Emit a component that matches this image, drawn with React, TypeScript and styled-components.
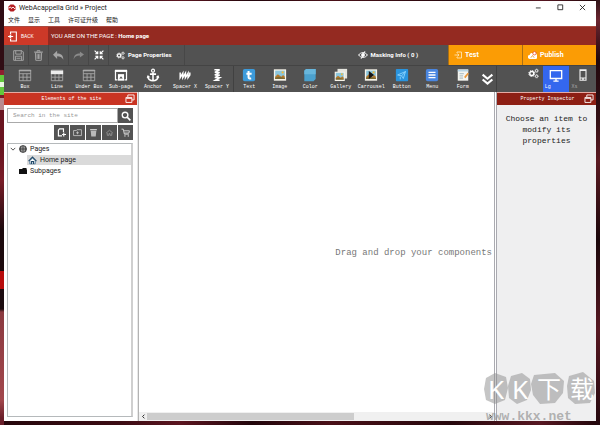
import React from "react";
import styled, { createGlobalStyle } from "styled-components";

const sans = `Roboto, "Noto Sans", "Noto Sans CJK SC", sans-serif`;
const mono = `"Liberation Mono", "Noto Sans CJK SC", monospace`;

const GlobalStyle = createGlobalStyle`
  * { box-sizing: border-box; }
  body { margin: 0; font-family: ${sans}; font-size: 7px; color: #222; overflow: hidden; }
  button, input { font: inherit; color: inherit; border: 0; padding: 0; margin: 0; background: none; }
  svg { display: block; flex: none; }
`;

const Desktop = styled.div`
  position: relative;
  height: 100vh;
  padding: 1px 4px 4px;
  background:
    linear-gradient(#300d14 0 70px, #8f1f30 70px 75px, #62c83c 75px 82px, #e8f6e0 82px 87px, #62c83c 87px 95px, #7a1c28 95px 98px, #b98b90 98px 110px, #6a1420 110px 150px, #7a1d28 180px, #1c0a0e 230px 271px, #b80c0c 271px 289px, #1c0c10 289px 309px, #8b3a40 312px, #a2474c 400px, #6a1f2a 418px) left / 4px 100% no-repeat,
    linear-gradient(#32161a, #6b2530 20px, #22080d 60px, #331015 120px, #5c1a22 160px, #1b070b 240px, #571822 330px, #24080e) right / 4px 100% no-repeat,
    linear-gradient(90deg, #25070c, #3c0c14 20%, #5c1520 30%, #22050b 42%, #4a1018 55%, #26070c 75%, #571722 90%, #20060a);
`;

const Window = styled.div`
  display: flex;
  flex-direction: column;
  height: 100%;
  background: #fff;
`;

const TitleBar = styled.header`
  display: flex;
  align-items: center;
  height: 13px;
  padding: 0 4px;
  gap: 3px;
  font-size: 7px;
  line-height: 10px;
`;
const Title = styled.h1`
  flex: 1;
  margin: 0;
  font-size: 7px;
  font-weight: 400;
`;
const WindowButton = styled.button`
  display: grid;
  place-items: center;
  width: 19px;
  height: 13px;
`;

const MenuBar = styled.nav`
  display: flex;
  align-items: center;
  height: 12px;
  padding: 0 4px;
  gap: 8px;
  font: 6px/10px "Noto Sans CJK SC", sans-serif;
`;

const LocationBar = styled.div`
  display: flex;
  height: 19px;
  background: #942a21;
  border-top: 1px solid #ab4a40;
  color: #fff;
  font-size: 6px;
  line-height: 10px;
  align-items: stretch;
`;
const BackButton = styled.button`
  display: flex;
  align-items: center;
  width: 44px;
  padding-left: 4px;
  gap: 4px;
  background: #cd3928;
  font-size: 5px;
`;
const Location = styled.p`
  margin: 0;
  padding-left: 3px;
  align-self: center;
`;

const ActionBar = styled.div`
  display: flex;
  height: 20px;
  background: #525252;
  color: #fff;
`;
const ToolButton = styled.button<{ $first?: boolean }>`
  display: grid;
  place-items: center;
  width: ${(p) => (p.$first ? 25 : 20)}px;
  padding-left: ${(p) => (p.$first ? 4 : 0)}px;
  border-right: 1px solid #474747;
`;
const TextButton = styled.button`
  display: flex;
  align-items: center;
  gap: 3px;
  padding: 0 13px 0 7px;
  border-right: 1px solid #474747;
  font-size: 6px;
  font-weight: 700;
  line-height: 10px;
  white-space: nowrap;
`;
const MaskingButton = styled(TextButton)`
  margin-left: auto;
  padding: 0 30px 0 0;
  border: 0;
`;
const AccentButton = styled(TextButton)`
  width: 74px;
  padding: 0 0 0 5px;
  border: 0;
  border-left: 1px solid #a86f16;
  background: #fb9c05;
  font-size: 7px;
`;

const ComponentBar = styled.div`
  display: flex;
  height: 27px;
  background: #525252;
  border-top: 1px solid #444;
  color: #fff;
`;
const LayoutGroup = styled.div`
  display: flex;
  width: 230px;
  padding-left: 5px;
  border-right: 1px solid #414141;
`;
const ContentGroup = styled.div`
  display: flex;
  flex: 1;
  min-width: 0;
`;
const ComponentButton = styled.button`
  display: flex;
  flex: 1 1 0;
  min-width: 0;
  flex-direction: column;
  align-items: center;
  padding-top: 2px;
  gap: 1px;
  font: 5px/8px ${mono};
  white-space: nowrap;
`;
const MoreButton = styled.button`
  display: grid;
  place-items: center;
  width: 18px;
`;
const DeviceGroup = styled.div`
  display: flex;
  width: 100px;
  padding-left: 30px;
  border-left: 1px solid #414141;
`;
const DeviceButton = styled.button<{ $active?: boolean }>`
  display: grid;
  grid-template-rows: 17px 8px;
  width: 27px;
  place-items: center;
  background: ${(p) => (p.$active ? "#3467ee" : "transparent")};
  color: ${(p) => (p.$active ? "#fff" : "#aaa")};
  font: 5px/8px ${mono};
  span { justify-self: start; padding-left: 2px; }
`;
const SettingsButton = styled.button`
  width: 16px;
  align-self: start;
  padding: 2px 0 0 1px;
`;

const Workspace = styled.main`
  display: flex;
  flex: 1;
  min-height: 0;
`;
const LeftPanel = styled.aside`
  display: flex;
  flex-direction: column;
  width: 134px;
  border-right: 1px solid #e8e8e8;
`;
const PanelHeader = styled.h2<{ $dark?: boolean }>`
  display: flex;
  align-items: center;
  margin: 0;
  height: 13px;
  padding: 0 2px 0 14px;
  border-top: 1px solid #e6aaa3;
  background: ${(p) => (p.$dark ? "#8d1f14" : "#c93423")};
  color: #fff;
  font: 5px/8px ${mono};
  span { flex: 1; text-align: center; white-space: nowrap; }
`;
const PanelBody = styled.div`
  display: flex;
  flex: 1;
  min-height: 0;
  flex-direction: column;
  padding: 3px 4px 4px 3px;
  gap: 2px;
`;
const SearchRow = styled.form`
  display: flex;
  height: 15px;
`;
const SearchInput = styled.input`
  flex: 1;
  min-width: 0;
  padding: 0 5px;
  border: 1px solid #aaa;
  font: 6px/10px ${mono};
  &::placeholder { color: #999; opacity: 1; }
`;
const SquareButton = styled.button`
  display: grid;
  place-items: center;
  width: 15px;
  height: 15px;
  background: #535353;
  color: #fff;
`;
const PageTools = styled.div`
  display: flex;
  justify-content: flex-end;
  gap: 1px;
`;
const Tree = styled.ul`
  flex: 1;
  margin: 1px 0 0;
  padding: 0;
  list-style: none;
  border: 1px solid #b5b9bb;
  border-right: 2px solid #cfcfcf;
`;
const TreeRow = styled.li<{ $selected?: boolean; $depth: number }>`
  display: flex;
  align-items: center;
  height: 10px;
  margin: 0 0 1px ${(p) => (p.$selected ? 19 : 0)}px;
  padding-left: ${(p) => (p.$selected ? 1 : p.$depth * 9 + 2)}px;
  gap: 3px;
  background: ${(p) => (p.$selected ? "#dadada" : "transparent")};
  font-size: 7px;
  line-height: 10px;
`;

const CanvasPane = styled.section`
  display: flex;
  flex: 1;
  min-width: 0;
  flex-direction: column;
  border-left: 1px solid #b3b3b3;
  border-right: 1px solid #aaaab0;
`;
const Canvas = styled.div`
  display: flex;
  flex: 1;
  align-items: center;
  justify-content: flex-end;
  padding: 2px 2px 0 0;
  color: #777;
  font: 9px/12px ${mono};
  white-space: nowrap;
`;
const Scrollbar = styled.div`
  display: flex;
  height: 9px;
  background: #f0f0f0;
`;
const ScrollButton = styled.button`
  display: grid;
  place-items: center;
  width: 8px;
`;
const ScrollTrack = styled.div`
  flex: 1;
`;
const ScrollThumb = styled.div`
  width: 61%;
  height: 7px;
  margin-top: 1px;
  background: #cdcdcd;
`;
const Inspector = styled.aside`
  width: 100px;
  margin-left: 1px;
  border-left: 1px solid #a9a9b0;
  background: #efeff0;
`;
const Hint = styled.p`
  margin: 0;
  padding: 8px 6px;
  text-align: center;
  font: 8px/11px ${mono};
`;

const Watermark = styled.div`
  position: absolute;
  right: 4px;
  bottom: 4px;
  width: 112px;
  height: 49px;
  pointer-events: none;
  svg { overflow: visible; }
`;

type IconProps = { children: React.ReactNode; w?: number; h?: number; box?: string };
const Icon = ({ children, w = 14, h = w, box = "0 0 16 16" }: IconProps) => (
  <svg width={w} height={h} viewBox={box} fill="none" stroke="currentColor" strokeWidth="1.4" aria-hidden="true">
    {children}
  </svg>
);

const Gear = ({ x, y, r }: { x: number; y: number; r: number }) => (
  <g>
    <circle cx={x} cy={y} r={r} strokeWidth={r * 0.7} />
    <circle cx={x} cy={y} r={r * 1.5} strokeWidth={r * 0.5} strokeDasharray={`${r * 0.65} ${r * 0.53}`} />
  </g>
);
const Gears = ({ size }: { size: number }) => (
  <Icon w={size}>
    <Gear x={5.5} y={8} r={2.9} />
    <Gear x={12.5} y={4} r={1.7} />
    <Gear x={12.5} y={12} r={1.7} />
  </Icon>
);

const Grid = ({ bright }: { bright?: boolean }) => (
  <Icon w={14} h={14}>
    <g stroke={bright ? "#eee" : "#a9a9a9"} strokeWidth="1">
      <path
        d="M1.5 2.5h13v12h-13zM1.5 6.5h13M1.5 10.5h13M5.8 6.5v8M10.2 6.5v8"
        stroke="#a9a9a9"
      />
      <path d={bright ? "M1 5h14" : "M1 3h14"} strokeWidth={bright ? 4 : 1.6} />
    </g>
  </Icon>
);
const SubPage = () => (
  <Icon>
    <path d="M1 2h14v2.500H1z" fill="#fff" stroke="none" />
    <path d="M1.700 3v10.500H4M14.300 3v10.500H12" />
    <path d="M4.500 7h7v7.500h-7z" fill="#fff" stroke="none" />
    <path d="M6 12l2-2.500 2 2.500z" fill="#525252" stroke="none" />
  </Icon>
);
const Anchor = () => (
  <Icon>
    <circle cx="8" cy="3" r="1.7" />
    <path d="M8 5v9.500M4.500 7h7M2 9.500c.5 3 3 5 6 5s5.500-2 6-5" strokeWidth="1.800" />
    <path d="M.8 11.500L2 8l3 2.500zM15.200 11.500L14 8l-3 2.500z" fill="#fff" stroke="none" />
  </Icon>
);
const SpacerX = () => (
  <Icon>
    <path d="M2.500 5v6l3-5v5l3-5v5l3-5v5l2-3V5" strokeWidth="1.700" />
  </Icon>
);
const SpacerY = () => (
  <Icon>
    <path d="M5 2h6L5.500 5H11L5.500 8H11l-5.500 3H11l-5 3h5" strokeWidth="1.700" />
  </Icon>
);
const TextIcon = () => (
  <Icon>
    <rect x="1" y="1" width="14" height="14" rx="2" fill="#3d9bdb" stroke="none" />
    <path d="M7.500 3.500v7q0 2 3 1.500M5 6.500h6" strokeWidth="2.300" />
  </Icon>
);
const Landscape = () => (
  <g stroke="none">
    <rect x="1" y="1.500" width="14" height="13" fill="#f7f3e9" />
    <rect x="2.500" y="3" width="11" height="9.500" fill="#8bc6dc" />
    <path d="M2.500 10l3-3 4 3 2-2 2 2v2.500h-11z" fill="#b77828" />
    <path d="M2.500 11l4-1 7 1.500v1h-11z" fill="#7a6a34" />
    <circle cx="11" cy="5" r="1.300" fill="#f3ba39" />
  </g>
);
const ImageIcon = () => <Icon><Landscape /></Icon>;
const ColorIcon = () => (
  <Icon>
    <path d="M3.500 1h11v11.500L12 15H1.500V3z" fill="#4ba1ce" stroke="none" />
    <path d="M3.500 1h11v6h-13V3z" fill="#68b6dc" stroke="none" />
  </Icon>
);
const GalleryIcon = () => (
  <Icon>
    <path d="M4 1h11v11H4z" fill="#e4e4de" stroke="none" />
    <g transform="translate(0 3) scale(.82)"><Landscape /></g>
  </Icon>
);
const CarouselIcon = () => (
  <Icon>
    <Landscape />
    <path d="M5.500 3.500l6 4.500-6 4.500z" fill="#151515" stroke="none" />
  </Icon>
);
const ButtonIcon = () => (
  <Icon>
    <rect x="1" y="1" width="14" height="14" rx="1" fill="#2a94de" stroke="none" />
    <path d="M3 8l9-4-2.500 8-2-3zM7.500 9L12 4M6 10v3" stroke="#8ed6ff" strokeWidth="1" />
  </Icon>
);
const MenuIcon = () => (
  <Icon>
    <rect x="1" y="1" width="14" height="14" rx="2" fill="#4a86e0" stroke="none" />
    <path d="M4 5h8M4 8h8M4 11h8" strokeWidth="1.500" />
  </Icon>
);
const FormIcon = () => (
  <Icon>
    <path d="M2 1.500h12v13H2z" fill="#f4f4ef" stroke="none" />
    <path d="M2 3h12" stroke="#b9d6e6" strokeWidth="2" />
    <path d="M4 6.500h5M4 9h4M4 11.500h4" stroke="#9cb3bd" strokeWidth="1" />
    <path d="M10 11l4-5" stroke="#eb983a" strokeWidth="2" />
  </Icon>
);
const Windows = () => (
  <Icon w={10} h={10}>
    <path d="M4.500 5V1.500h10v8H11M1.500 5.500H11v8H1.500zM2 7h9" />
  </Icon>
);

const layoutItems: [string, React.ReactNode][] = [
  ["Box", <Grid />],
  ["Line", <Grid bright />],
  ["Under Box", <Grid />],
  ["Sub-page", <SubPage />],
  ["Anchor", <Anchor />],
  ["Spacer X", <SpacerX />],
  ["Spacer Y", <SpacerY />],
];
const contentItems: [string, React.ReactNode][] = [
  ["Text", <TextIcon />],
  ["Image", <ImageIcon />],
  ["Color", <ColorIcon />],
  ["Gallery", <GalleryIcon />],
  ["Carrousel", <CarouselIcon />],
  ["Button", <ButtonIcon />],
  ["Menu", <MenuIcon />],
  ["Form", <FormIcon />],
];
const pageTools: [string, React.ReactNode][] = [
  ["New page", <><path d="M9 14H2.500V4l2-2.500h7V7" strokeWidth="2" /><path d="M12 8v7M9 11.500h7" strokeWidth="2" /></>],
  ["New folder", <path d="M1 4.500h5L7 3h8v10.500H1zM8 6v5M5.500 8.500h5" stroke="#c9c9c9" />],
  ["Delete", <><path d="M3 5h10l-1 10H4z" fill="#bbb" stroke="none" /><path d="M2 3h12" stroke="#ddd" strokeWidth="2" /></>],
  ["Set as home", <path d="M2 9l6-5 6 5M4 9v4h3v-3h2v3h3V9" stroke="#999" />],
  ["Shop", <><path d="M1 2h3l2 9h8M5 5h10l-1 4H6" stroke="#ddd" strokeWidth="1.600" /><circle cx="7" cy="14" r="1.300" fill="#ddd" stroke="none" /><circle cx="13" cy="14" r="1.300" fill="#ddd" stroke="none" /></>],
];

export default function App() {
  return (
    <Desktop>
      <GlobalStyle />
      <Window>
        <TitleBar>
          <Icon w={8}>
            <path d="M5 1h6l4 4v6l-4 4H5l-4-4V5z" fill="#b51d20" stroke="none" />
            <path d="M2 8l3-2 2 3 3-3 4 4" stroke="#fff" strokeWidth="1.800" />
          </Icon>
          <Title>WebAcappella Grid » Project</Title>
          <WindowButton aria-label="Minimize"><Icon w={7}><path d="M2 9h11" strokeWidth="2" /></Icon></WindowButton>
          <WindowButton aria-label="Maximize"><Icon w={7}><path d="M2 2h11v11H2z" strokeWidth="2" /></Icon></WindowButton>
          <WindowButton aria-label="Close"><Icon w={7}><path d="M2 2l12 12M14 2L2 14" strokeWidth="2" /></Icon></WindowButton>
        </TitleBar>
        <MenuBar>
          {["文件", "显示", "工具", "许可证升级", "帮助"].map((m) => (
            <button key={m}>{m}</button>
          ))}
        </MenuBar>
        <LocationBar>
          <BackButton>
            <Icon w={9} h={11} box="0 0 14 16">
              <path d="M4 4V1h9v14H4v-3M0 8h8M5 5L2 8l3 3" strokeWidth="1.700" />
            </Icon>
            BACK
          </BackButton>
          <Location>YOU ARE ON THE PAGE : <b>Home page</b></Location>
        </LocationBar>
        <ActionBar>
          <ToolButton $first aria-label="Save">
            <Icon w={11}><g stroke="#a5a5a5"><path d="M1 1h12l2 2v12H1zM4 1v5h8V1M3.500 15V9h9v6M5 12h6" /></g></Icon>
          </ToolButton>
          <ToolButton aria-label="Delete">
            <Icon w={11}><g stroke="#a5a5a5"><path d="M3.500 4h9l-.5 11H4zM1.500 3h13M6 2.500V1h4v1.500M6 6v7M8 6v7M10 6v7" /></g></Icon>
          </ToolButton>
          <ToolButton aria-label="Undo">
            <Icon w={11}><path d="M6 1v4c5 0 9 2 9 9-2-4-5-5-9-5v4L0 7z" fill="#a5a5a5" stroke="none" /></Icon>
          </ToolButton>
          <ToolButton aria-label="Redo">
            <Icon w={11}><path d="M10 2v3C5 5 1 7 1 14c1-4 4-6 9-6v3l6-4.500z" fill="#8a8a8a" stroke="none" /></Icon>
          </ToolButton>
          <ToolButton aria-label="Fit">
            <Icon w={10}><path d="M1 1l5 5M6 2v4H2M15 1l-5 5M10 2v4h4M1 15l5-5M2 10h4v4M15 15l-5-5M14 10h-4v4" strokeWidth="1.800" /></Icon>
          </ToolButton>
          <TextButton><Gears size={9} />Page Properties</TextButton>
          <MaskingButton>
            <Icon w={10}><path d="M1 8c3-5 11-5 14 0-3 5-11 5-14 0zM11 2L5 14" strokeWidth="1.600" /><circle cx="8" cy="8" r="2.300" fill="#fff" /></Icon>
            Masking Info ( 0 )
          </MaskingButton>
          <AccentButton>
            <Icon w={8}><path d="M6 4V2h9v12H6v-2M1 8h9M7 5l3 3-3 3" stroke="#ffe2ae" strokeWidth="1.800" /></Icon>
            Test
          </AccentButton>
          <AccentButton>
            <Icon w={9}>
              <path d="M3 14a3 3 0 010-7 4 4 0 017-2 4 4 0 014 9z" fill="#fff" stroke="none" />
              <circle cx="11.500" cy="4" r="3" fill="#fff" stroke="#e84b25" />
              <path d="M5 12l3-4 3 4" stroke="#e99522" />
            </Icon>
            Publish
          </AccentButton>
        </ActionBar>
        <ComponentBar>
          <LayoutGroup>
            {layoutItems.map(([label, icon]) => (
              <ComponentButton key={label}>{icon}{label}</ComponentButton>
            ))}
          </LayoutGroup>
          <ContentGroup>
            {contentItems.map(([label, icon]) => (
              <ComponentButton key={label}>{icon}{label}</ComponentButton>
            ))}
            <MoreButton aria-label="More components">
              <Icon w={13}><path d="M2 2l6 5 6-5M2 8l6 5 6-5" strokeWidth="2.600" /></Icon>
            </MoreButton>
          </ContentGroup>
          <DeviceGroup>
            <SettingsButton aria-label="Settings"><Gears size={11} /></SettingsButton>
            <DeviceButton $active>
              <Icon w={14}><path d="M1.500 3h13v9h-13zM8 12v3M5 15h6" strokeWidth="1.500" /></Icon>
              <span>Lg</span>
            </DeviceButton>
            <DeviceButton>
              <Icon w={12}><path d="M4 1h8v14H4zM7 13.500h2M4 2h8M4 12h8" stroke="#eee" strokeWidth="1.500" /></Icon>
              <span>Xs</span>
            </DeviceButton>
          </DeviceGroup>
        </ComponentBar>
        <Workspace>
          <LeftPanel>
            <PanelHeader><span>Elements of the site</span><Windows /></PanelHeader>
            <PanelBody>
              <SearchRow onSubmit={(e) => e.preventDefault()}>
                <SearchInput aria-label="Search in the site" placeholder="Search in the site" />
                <SquareButton aria-label="Search">
                  <Icon w={10}><circle cx="6.500" cy="6.500" r="4.500" strokeWidth="2.200" /><path d="M10 10l5 5" strokeWidth="2.800" /></Icon>
                </SquareButton>
              </SearchRow>
              <PageTools>
                {pageTools.map(([label, icon]) => (
                  <SquareButton key={label} aria-label={label}><Icon w={9}>{icon}</Icon></SquareButton>
                ))}
              </PageTools>
              <Tree>
                <TreeRow $depth={0}>
                  <Icon w={6}><path d="M2 5l6 6 6-6" stroke="#333" strokeWidth="2.200" /></Icon>
                  <Icon w={8}><circle cx="8" cy="8" r="7" fill="#999" stroke="#333" /><path d="M8 1v14M1 8h14M4 2.500c-2 4-2 7 0 11M12 2.500c2 4 2 7 0 11" stroke="#333" /></Icon>
                  Pages
                </TreeRow>
                <TreeRow $depth={1} $selected>
                  <Icon w={9}><path d="M3 8v6h10V8L8 4z" fill="#fff" stroke="#4a7494" /><path d="M1 9l7-7 7 7M6 14v-4h4v4" stroke="#1f4868" strokeWidth="2" /></Icon>
                  Home page
                </TreeRow>
                <TreeRow $depth={1}>
                  <Icon w={8}><path d="M0 4h6l2-2h7v3h1v9H0z" fill="#111" stroke="none" /></Icon>
                  Subpages
                </TreeRow>
              </Tree>
            </PanelBody>
          </LeftPanel>
          <CanvasPane>
            <Canvas>Drag and drop your components</Canvas>
            <Scrollbar>
              <ScrollButton aria-label="Scroll left"><Icon w={5}><path d="M11 2L5 8l6 6" strokeWidth="3" /></Icon></ScrollButton>
              <ScrollTrack><ScrollThumb /></ScrollTrack>
              <ScrollButton aria-label="Scroll right"><Icon w={5}><path d="M5 2l6 6-6 6" strokeWidth="3" /></Icon></ScrollButton>
            </Scrollbar>
          </CanvasPane>
          <Inspector>
            <PanelHeader $dark><span>Property Inspector</span><Windows /></PanelHeader>
            <Hint>Choose an item to modify its properties</Hint>
          </Inspector>
        </Workspace>
      </Window>
      <Watermark>
        <svg width="112" height="49" viewBox="0 0 112 49">
          <g fill="#8c8c8c" fillOpacity=".5">
            <path d="M2 6l9-5 11 4 2 11-3 12-10 4-9-4-2-11z" />
            <path d="M27 4l11-3 8 6 1 11-4 10-10 4-8-6-1-12z" />
            <path d="M50 3l21-2 9 8-1 12-8 10-15 1-7-9-2-11z" />
            <path d="M85 4l14-4 11 9 1 12-5 10-15 1-7-6-1-12z" />
          </g>
          <g fill="#fff" fontFamily='"Noto Sans", sans-serif' fontSize="26">
            <text x="4" y="27">K</text>
            <text x="28" y="27">K</text>
            <g fontFamily='"Noto Sans CJK SC", sans-serif' fontSize="24">
              <text x="53" y="26">下</text>
              <text x="86" y="26">载</text>
            </g>
          </g>
          <text x="2" y="48" fill="#8c8c8c" fillOpacity=".65" fontFamily='"Liberation Mono", monospace' fontWeight="700" fontSize="13">www.kkx.net</text>
        </svg>
      </Watermark>
    </Desktop>
  );
}
